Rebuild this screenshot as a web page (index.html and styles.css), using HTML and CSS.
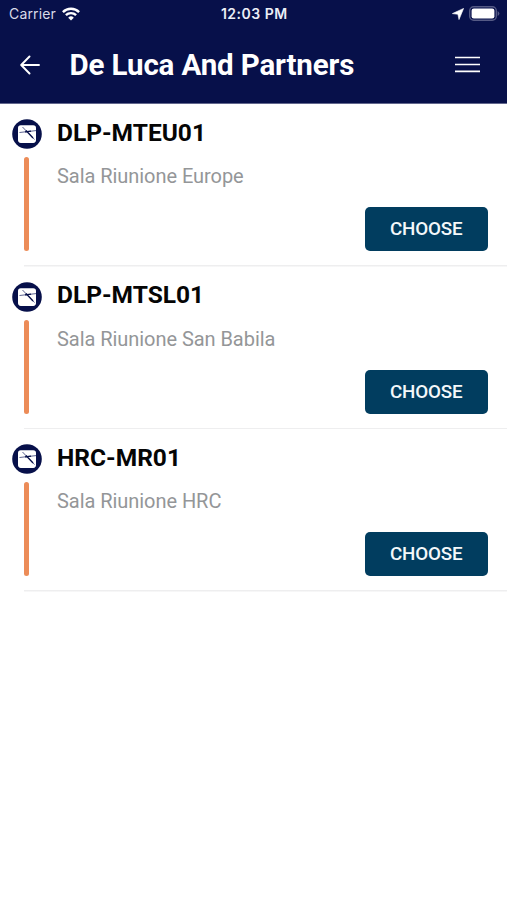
FILE: index.html
```html
<!DOCTYPE html>
<html lang="en">
<head>
<meta charset="utf-8">
<title>De Luca And Partners</title>
<link rel="stylesheet" href="styles.css">
</head>
<body>
<svg class="defs" width="0" height="0" aria-hidden="true">
  <symbol id="room" viewBox="0 0 30 30">
    <circle cx="15" cy="15" r="14.8" fill="#07104a"/>
    <rect x="6" y="6.300" width="18" height="17.600" rx="2.800" fill="#fff"/>
    <path d="M7.500 13.500 24 11.600M10.500 8 22.500 20.500" stroke="#5c6390" stroke-width="1" fill="none"/>
    <path d="M13 12.900 19 12.200M14 11.500 21 19" stroke="#07104a" stroke-width="1.300" fill="none"/>
  </symbol>
</svg>
<header class="header">
  <div class="status">
    <div class="carrier"><span>Carrier</span>
      <svg width="18" height="14" viewBox="0 0 18 14" fill="none" stroke="#fff" stroke-width="2.4"><path d="M.9 5.1a11.5 11.5 0 0 1 16.2 0M3.9 8.2a7.2 7.2 0 0 1 10.2 0"/><path d="M9 13.6 6.2 10.7a4 4 0 0 1 5.6 0z" fill="#fff" stroke="none"/></svg>
    </div>
    <div class="clock">12:03 PM</div>
    <div class="power">
      <svg width="12" height="12" viewBox="0 0 12 12"><path d="M11.600.4 7 11.600 5.900 6.300.4 5.600z" fill="#fff" stroke="#fff" stroke-width=".6" stroke-linejoin="round"/></svg>
      <svg width="31" height="15" viewBox="0 0 31 15"><rect x=".7" y=".7" width="26.600" height="13.600" rx="4" fill="none" stroke="#555a85" stroke-width="1.400"/><rect x="2.600" y="2.600" width="22.800" height="9.800" rx="2.200" fill="#fff"/><path d="M28.600 5v5q1.800-1 1.800-2.500T28.600 5z" fill="#555a85"/></svg>
    </div>
  </div>
  <div class="bar">
    <svg class="back" width="20" height="20" viewBox="0 0 20 20" fill="none" stroke="#fff" stroke-width="1.900" stroke-linecap="round" stroke-linejoin="round"><path d="M19 10H1.500M9.500 1.500 1.200 10l8.300 8.500"/></svg>
    <h1 class="title">De Luca And Partners</h1>
    <svg class="menu" width="25" height="17" viewBox="0 0 25 17" stroke="#fff" stroke-width="1.700"><path d="M0 1.500h25M0 8.500h25M0 15.300h25"/></svg>
  </div>
</header>
<main>
  <section class="room">
    <div class="rail"><svg class="badge"><use href="#room"/></svg><i class="line"></i></div>
    <div class="body"><h2 class="name">DLP-MTEU01</h2><p class="desc">Sala Riunione Europe</p><button class="choose">CHOOSE</button></div>
  </section>
  <section class="room">
    <div class="rail"><svg class="badge"><use href="#room"/></svg><i class="line"></i></div>
    <div class="body"><h2 class="name">DLP-MTSL01</h2><p class="desc">Sala Riunione San Babila</p><button class="choose">CHOOSE</button></div>
  </section>
  <section class="room">
    <div class="rail"><svg class="badge"><use href="#room"/></svg><i class="line"></i></div>
    <div class="body"><h2 class="name">HRC-MR01</h2><p class="desc">Sala Riunione HRC</p><button class="choose">CHOOSE</button></div>
  </section>
</main>
</body>
</html>
```
FILE: styles.css
```css
* { box-sizing: border-box; }
body { margin: 0; background: #fff; font-family: Roboto, "Liberation Sans", sans-serif; }
h1, h2, p { margin: 0; white-space: nowrap; }
svg { display: block; flex: none; }
.defs { position: absolute; }
.header { height: 104px; background: #07104a; border-bottom: 1px solid #62678d; color: #fff; }
.status { height: 27px; display: grid; grid-template-columns: 1fr auto 1fr; align-items: center; padding: 0 7.500px 0 9px; font-family: Inter, sans-serif; font-size: 14px; }
.carrier { display: flex; align-items: center; gap: 6px; color: #d9dbe8; letter-spacing: .15px; }
.clock { font-size: 14px; font-weight: 600; letter-spacing: .5px; color: #eceef6; }
.power { display: flex; justify-content: flex-end; align-items: center; gap: 5px; }
.bar { height: 75px; display: flex; align-items: center; padding: 0 27px 0 20px; }
.title { margin-left: 29.500px; font-size: 29.500px; font-weight: 700; line-height: 36px; letter-spacing: -.14px; }
.menu { margin-left: auto; }
.room { display: flex; height: 162.500px; padding: 15px 19.500px 0 11.500px; background: linear-gradient(#eeeeef, #eeeeef) 24px 100% / 100% 1.500px no-repeat; }
.rail { width: 45.500px; flex: none; }
.badge { width: 30px; height: 30px; }
.line { display: block; width: 5px; height: 94px; margin: 8px 0 0 12.500px; border-radius: 3px; background: #ec8c58; }
.body { flex: 1; display: flex; flex-direction: column; }
.name { margin-top: -1.500px; font-size: 24.500px; font-weight: 700; line-height: 30px; color: #050505; }
.desc { margin-top: 15.500px; font-size: 20px; line-height: 26px; letter-spacing: -.05px; color: #949698; }
.choose { align-self: flex-end; width: 122.500px; height: 44px; margin-top: 18px; padding: 0; border: 0; border-radius: 5px; background: #013d5f; color: #f4f8fa; font: 500 18.800px/44px Roboto, sans-serif; letter-spacing: -.15px; }
```
